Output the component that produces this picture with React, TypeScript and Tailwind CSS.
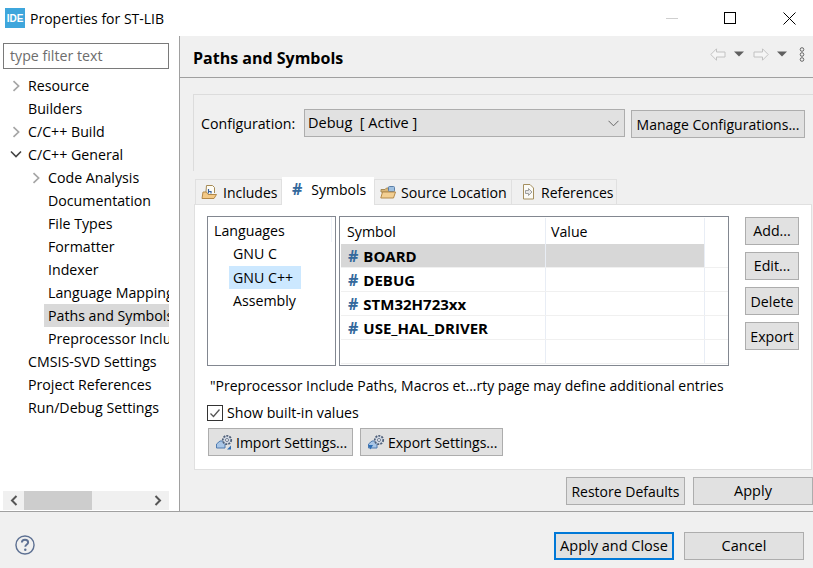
import React from "react";

const Chevron = () => (
  <svg width="10" height="12" viewBox="0 0 10 12" className="shrink-0">
    <path d="M2.5 1.2 L7.6 6 L2.5 10.8" fill="none" stroke="#a6a6a6" strokeWidth="1.7" />
  </svg>
);
const ChevronDown = () => (
  <svg width="12" height="10" viewBox="0 0 12 10" className="shrink-0">
    <path d="M1 2.5 L6 7.5 L11 2.5" fill="none" stroke="#444" strokeWidth="1.6" />
  </svg>
);
const ComboChevron = () => (
  <svg width="11" height="7" viewBox="0 0 11 7" className="shrink-0">
    <path d="M0.5 0.8 L5.5 5.8 L10.5 0.8" fill="none" stroke="#666" strokeWidth="1" />
  </svg>
);

const Row = ({ level, arrow, label, selected }: { level: 0 | 1; arrow?: "r" | "d"; label: string; selected?: boolean }) => (
  <div className={`relative flex h-[23px] items-center whitespace-nowrap ${level === 0 ? "pl-[28px]" : "pl-[48px]"}`}>
    {arrow && (
      <span className={`absolute top-[6px] ${level === 0 ? "left-[10px]" : "left-[30px]"}`}>
        {arrow === "r" ? <span className="ml-[1px] block"><Chevron /></span> : <ChevronDown />}
      </span>
    )}
    {selected && <span className="absolute left-[44px] right-0 top-0 h-[23px] bg-[#d9d9d9]" />}
    <span className="relative">{label}</span>
  </div>
);

const Btn = ({ className, children }: { className: string; children: React.ReactNode }) => (
  <div className={`flex h-[28px] items-center justify-center whitespace-nowrap border border-[#adadad] bg-[#e1e1e1] ${className}`}>{children}</div>
);

const Hash = ({ className }: { className?: string }) => <span className={`text-[16px] font-bold text-[#34699c] ${className ?? ""}`}>#</span>;

const IncludesIcon = () => (
  <svg width="16" height="16" viewBox="0 0 16 16" className="shrink-0">
    <path d="M4.5 13 L5.5 1.5 H11.5 L13.5 3.5 V9" fill="#fdfbf4" stroke="#a58a55" />
    <path d="M7.5 5 V9.5 M7.5 7.5 H10 V9.5" fill="none" stroke="#355f9c" strokeWidth="1.2" />
    <path d="M1 14.5 L2 8 H5.5 L7 10.5 H15.5 L13 14.5 Z" fill="#f3c987" stroke="#b3894a" />
  </svg>
);

const SourceIcon = () => (
  <svg width="16" height="16" viewBox="0 0 16 16" className="shrink-0">
    <path d="M1 5.5 H5 L6.5 4 H14 V8 H1 Z" fill="#d9b578" stroke="#a58a55" />
    <rect x="8.5" y="2.5" width="6" height="5" rx="1" fill="#9fc0e0" stroke="#5b7fa8" />
    <path d="M0.8 14 L2.5 8 H15.5 L13.5 14 Z" fill="#f3cf92" stroke="#b3894a" />
  </svg>
);

const RefIcon = () => (
  <svg width="16" height="16" viewBox="0 0 16 16" className="shrink-0">
    <path d="M2.5 0.5 H9 L12.5 4 V15 H2.5 Z" fill="#fbfbf7" stroke="#a58f5e" />
    <path d="M4.5 6.5 H7.5 V4.5 L11 8 L7.5 11.5 V9.5 H4.5 Z" fill="#e9e9e9" stroke="#8a8a8a" strokeWidth="0.8" />
  </svg>
);

const GearIcon = ({ flip }: { flip?: boolean }) => (
  <svg width="18" height="17" viewBox="0 0 18 17" className="shrink-0">
    <path d="M0.5 10 L4 7 H9 V14 H0.5 Z" fill="#a9c6e6" stroke="#4f7bb0" />
    <circle cx="11" cy="6" r="4.2" fill="#d4dae4" stroke="#4f6079" strokeWidth="1.8" strokeDasharray="2 1.1" />
    <circle cx="11" cy="6" r="1.5" fill="#fff" stroke="#4f6079" strokeWidth="0.8" />
    <path d={flip ? "M11 15.5 L15 15.5 L15 11.5 Z" : "M0 11 H5 L2.5 15.5 Z"} fill="#2f6fb5" />
  </svg>
);

const NavArrow = ({ dir }: { dir: "l" | "r" }) => (
  <svg width="16" height="13" viewBox="0 0 16 13" className="shrink-0">
    <path
      d={dir === "l" ? "M0.8 6.5 L6.5 0.8 V4 H15 V9 H6.5 V12.2 Z" : "M15.2 6.5 L9.5 0.8 V4 H1 V9 H9.5 V12.2 Z"}
      fill="#f5f5f5"
      stroke="#c2c2c2"
    />
  </svg>
);
const DropTri = () => (
  <svg width="10" height="6" viewBox="0 0 10 6" className="block shrink-0">
    <path d="M0 0.5 H10 L5 5.5 Z" fill="#5f5f5f" />
  </svg>
);

export default function App() {
  const rows = ["BOARD", "DEBUG", "STM32H723xx", "USE_HAL_DRIVER", ""];
  return (
    <div className="flex h-[568px] w-[813px] flex-col overflow-hidden bg-[#f0f0f0] text-[14.2px] text-black [font-family:'Open_Sans','Noto_Sans',sans-serif]">
      {/* Title bar */}
      <div className="flex h-[36px] shrink-0 items-center bg-white pl-[5px]">
        <div className="flex h-[20px] w-[20px] items-center justify-center bg-[#3ea6dc] text-[10px] font-bold text-white [font-family:'Liberation_Sans',sans-serif]">IDE</div>
        <span className="ml-[5px] text-[14px]">Properties for ST-LIB</span>
        <div className="ml-auto flex items-center">
          <span className="mr-[46px] h-px w-[12px] bg-[#cfcfcf]" />
          <span className="mr-[47px] h-[12px] w-[12px] border border-black" />
          <svg width="13" height="13" viewBox="0 0 13 13" className="mr-[17px]">
            <path d="M0.5 0.5 L12.5 12.5 M12.5 0.5 L0.5 12.5" stroke="#000" strokeWidth="1" fill="none" />
          </svg>
        </div>
      </div>

      {/* Main */}
      <div className="flex h-[476px] shrink-0 border-b border-[#a0a0a0]">
        {/* Left */}
        <div className="flex w-[180px] shrink-0 flex-col border-r border-[#a0a0a0] bg-white">
          <div className="ml-[3px] mt-[7px] flex h-[26px] w-[166px] items-center border border-[#7a7a7a] px-[6px] text-[#6d6d6d]">type filter text</div>
          <div className="mt-[5px] h-[417px] w-[169px] overflow-hidden">
            <Row level={0} arrow="r" label="Resource" />
            <Row level={0} label="Builders" />
            <Row level={0} arrow="r" label="C/C++ Build" />
            <Row level={0} arrow="d" label="C/C++ General" />
            <Row level={1} arrow="r" label="Code Analysis" />
            <Row level={1} label="Documentation" />
            <Row level={1} label="File Types" />
            <Row level={1} label="Formatter" />
            <Row level={1} label="Indexer" />
            <Row level={1} label="Language Mappings" />
            <Row level={1} label="Paths and Symbols" selected />
            <Row level={1} label="Preprocessor Include Paths" />
            <Row level={0} label="CMSIS-SVD Settings" />
            <Row level={0} label="Project References" />
            <Row level={0} label="Run/Debug Settings" />
          </div>
          <div className="ml-[3px] flex h-[19px] w-[166px] items-center bg-[#f0f0f0]">
            <svg width="21" height="19" viewBox="0 0 21 19" className="shrink-0">
              <path d="M13.5 5 L9 9.5 L13.5 14" fill="none" stroke="#555" strokeWidth="2" />
            </svg>
            <div className="h-[19px] w-[68px] bg-[#cdcdcd]" />
            <svg width="21" height="19" viewBox="0 0 21 19" className="ml-auto shrink-0">
              <path d="M7.5 5 L12 9.5 L7.5 14" fill="none" stroke="#555" strokeWidth="2" />
            </svg>
          </div>
        </div>

        {/* Right */}
        <div className="flex min-w-0 flex-1 flex-col">
          <div className="flex h-[42px] shrink-0 items-center justify-between border-b border-[#a0a0a0] pl-[13px] pr-[8px]">
            <span className="mt-[3px] text-[16px] font-bold">Paths and Symbols</span>
            <div className="mb-[5px] flex items-center">
              <NavArrow dir="l" />
              <span className="ml-[8px]"><DropTri /></span>
              <span className="ml-[9px]"><NavArrow dir="r" /></span>
              <span className="ml-[8px]"><DropTri /></span>
              <svg width="6" height="15" viewBox="0 0 6 15" className="ml-[12px]">
                <circle cx="3" cy="2.5" r="1.8" fill="none" stroke="#666" />
                <circle cx="3" cy="7.5" r="1.8" fill="none" stroke="#666" />
                <circle cx="3" cy="12.5" r="1.8" fill="none" stroke="#666" />
              </svg>
            </div>
          </div>

          {/* Configuration group */}
          <div className="ml-[13px] mt-[16px] flex h-[77px] shrink-0 items-start border-l border-t border-[#dcdcdc] pl-[7px] pt-[14px]">
            <span className="flex h-[28px] w-[103px] items-center whitespace-nowrap pt-[2px]">Configuration:</span>
            <div className="flex h-[28px] w-[321px] items-center justify-between border border-[#adadad] bg-[#e1e1e1] pl-[3px] pr-[5px]">
              <span className="whitespace-pre text-[14.5px]">Debug  [ Active ]</span>
              <ComboChevron />
            </div>
            <Btn className="ml-[6px] mt-[1px] w-[174px] text-[14px]">Manage Configurations...</Btn>
          </div>

          {/* Tabs */}
          <div className="ml-[15px] mt-[6px] flex h-[27px] shrink-0 items-start">
            <div className="mt-[2px] flex h-[25px] w-[87px] items-center gap-[6px] border border-b-0 border-[#e0e0e0] pl-[5px] text-[14px]"><IncludesIcon />Includes</div>
            <div className="z-10 flex h-[28px] w-[92px] items-center gap-[9px] bg-white pb-[4px] pl-[10px] text-[14px]"><Hash />Symbols</div>
            <div className="mt-[2px] flex h-[25px] w-[138px] items-center gap-[5px] border border-b-0 border-[#e0e0e0] pl-[5px]"><SourceIcon /><span className="mt-px">Source Location</span></div>
            <div className="mt-[2px] flex h-[25px] w-[105px] items-center gap-[4px] border border-b-0 border-l-0 border-[#e0e0e0] pl-[9px] text-[14px]"><RefIcon />References</div>
          </div>

          {/* Tab panel */}
          <div className="ml-[14px] flex h-[266px] w-[618px] shrink-0 flex-col border border-[#e0e0e0] bg-white pl-[12px] pt-[11px]">
            <div className="flex h-[150px] shrink-0">
              {/* Languages */}
              <div className="h-[150px] w-[129px] border border-[#828790]">
                <div className="mr-[3px] flex h-[25px] items-center border-r border-[#eef2f8] pl-[6px] pt-[2px]">Languages</div>
                <div className="flex h-[24px] items-center pl-[25px]">GNU C</div>
                <div className="ml-[21px] flex h-[23px] w-[72px] items-center bg-[#cce8ff] pl-[4px]">GNU C++</div>
                <div className="flex h-[23px] items-center pl-[25px]">Assembly</div>
              </div>
              {/* Table */}
              <div className="ml-[3px] h-[150px] w-[390px] border border-[#828790] pl-px pt-px">
                <div className="flex h-[26px] items-center">
                  <div className="flex h-full w-[205px] items-center border-r border-[#e8edf5] pl-[6px] pt-[2px]">Symbol</div>
                  <div className="flex h-full w-[159px] items-center border-r border-[#e8edf5] pl-[5px] pt-[2px]">Value</div>
                </div>
                {rows.map((r, i) => (
                  <div key={i} className="flex h-[24px] border-b border-[#f0f0f0]">
                    <div className={`flex w-[205px] items-center border-r border-[#e8edf5] pl-[7px] pt-px text-[15px] font-bold ${i === 0 ? "bg-[#d7d7d7]" : ""}`}>
                      {r && <Hash className="mr-[5px]" />}
                      <span>{r}</span>
                    </div>
                    <div className={`w-[159px] border-r border-[#e8edf5] ${i === 0 ? "bg-[#d7d7d7]" : ""}`} />
                  </div>
                ))}
              </div>
              {/* Buttons */}
              <div className="ml-[16px] flex w-[54px] flex-col gap-[7px] pt-[1px]">
                <Btn className="">Add...</Btn>
                <Btn className="">Edit...</Btn>
                <Btn className="pt-px">Delete</Btn>
                <Btn className="pt-px">Export</Btn>
              </div>
            </div>
            <div className="ml-[3px] mt-[9px] flex h-[20px] items-center whitespace-nowrap text-[14px]">"Preprocessor Include Paths, Macros et...rty page may define additional entries</div>
            <div className="mt-[10px] flex h-[16px] items-center">
              <span className="flex h-[16px] w-[16px] items-center justify-center border border-[#333]">
                <svg width="12" height="12" viewBox="0 0 12 12"><path d="M1.5 6.5 L4.5 9.5 L10.5 2.5" fill="none" stroke="#555" strokeWidth="1.3" /></svg>
              </span>
              <span className="ml-[4px]">Show built-in values</span>
            </div>
            <div className="ml-px mt-[7px] flex gap-[7px]">
              <Btn className="w-[145px] !justify-start gap-[2px] pl-[7px] text-[14px]"><GearIcon flip />Import Settings...</Btn>
              <Btn className="w-[143px] !justify-start gap-[2px] pl-[7px] text-[14px]"><GearIcon />Export Settings...</Btn>
            </div>
          </div>

          {/* Restore / Apply */}
          <div className="mt-[7px] flex justify-end gap-[8px]">
            <Btn className="w-[119px] text-[14px]">Restore Defaults</Btn>
            <Btn className="w-[120px] text-[14.5px]">Apply</Btn>
          </div>
        </div>
      </div>

      {/* Footer */}
      <div className="flex flex-1 items-start pl-[15px] pt-[20px] text-[14.5px]">
        <svg width="20" height="20" viewBox="0 0 21 21" className="mt-[3px] shrink-0">
          <circle cx="10.5" cy="10.5" r="9.5" fill="none" stroke="#5e7193" strokeWidth="1.5" />
          <path d="M7.2 8 C7.2 5.9 8.8 5 10.5 5 C12.3 5 13.8 6 13.8 7.8 C13.8 10 10.8 10 10.8 12.4" fill="none" stroke="#5e7193" strokeWidth="2" />
          <circle cx="10.8" cy="15.4" r="1.3" fill="#5e7193" />
        </svg>
        <div className="ml-auto mr-[9px] flex gap-[10px]">
          <div className="flex h-[28px] w-[120px] items-center justify-center whitespace-nowrap border-2 border-[#0078d7] bg-[#e1e1e1]">Apply and Close</div>
          <Btn className="w-[120px]">Cancel</Btn>
        </div>
      </div>
    </div>
  );
}
